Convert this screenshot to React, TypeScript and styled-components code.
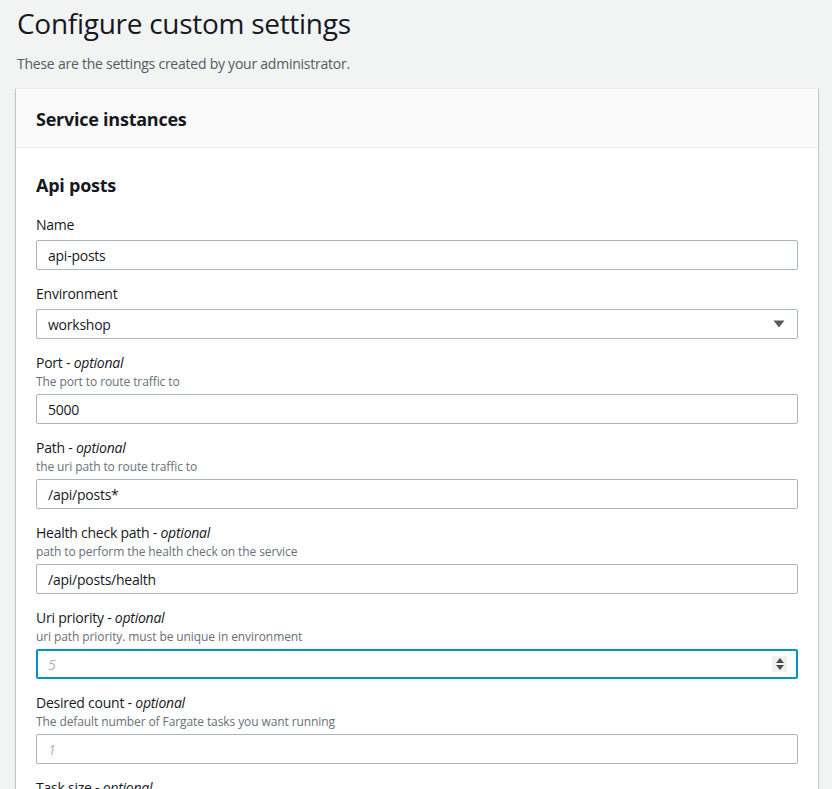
import React from "react";
import styled, { createGlobalStyle } from "styled-components";

const GlobalStyle = createGlobalStyle`
  html, body {
    margin: 0;
    padding: 0;
    background: #f2f3f3;
  }
  body {
    font-family: "Open Sans", "Noto Sans", Arial, sans-serif;
    color: #16191f;
    letter-spacing: -0.015em;
  }
`;

const Page = styled.div`
  padding: 0 14px 40px 16px;
`;

const Title = styled.h1`
  margin: 0;
  padding: 3px 0 0 1px;
  font-size: 28px;
  line-height: 40px;
  font-weight: 400;
  letter-spacing: -0.01em;
  color: #16191f;
`;

const Subtitle = styled.p`
  margin: 10px 0 0 1px;
  font-size: 14px;
  line-height: 22px;
  color: #545b64;
`;

const Container = styled.section`
  margin-top: 13px;
  background: #ffffff;
  box-shadow: 0 1px 1px 0 rgba(0, 28, 36, 0.3), 1px 1px 1px 0 rgba(0, 28, 36, 0.15),
    -1px 1px 1px 0 rgba(0, 28, 36, 0.15);
  border-top: 1px solid #eaeded;
`;

const ContainerHeader = styled.header`
  background: #fafafa;
  border-bottom: 1px solid #eaeded;
  padding: 2px 20px 0;
  height: 59px;
  box-sizing: border-box;
  display: flex;
  align-items: center;
`;

const HeaderTitle = styled.h2`
  margin: 0;
  font-size: 18px;
  line-height: 24px;
  font-weight: 700;
`;

const Body = styled.div`
  padding: 22px 20px 20px;
  display: flex;
  flex-direction: column;
`;

const SectionTitle = styled.h3`
  margin: 0 0 14px;
  font-size: 18px;
  line-height: 30px;
  font-weight: 700;
`;

const Fields = styled.div`
  display: flex;
  flex-direction: column;
  gap: 13px;
`;

const Field = styled.div`
  display: flex;
  flex-direction: column;
`;

const Label = styled.label`
  font-size: 14px;
  line-height: 22px;
  color: #16191f;
`;

const Optional = styled.i`
  font-style: italic;
`;

const Description = styled.div`
  font-size: 12px;
  line-height: 16px;
  letter-spacing: -0.008em;
  color: #687078;
`;

const Box = styled.div<{ $focused?: boolean }>`
  margin-top: 4px;
  height: 30px;
  box-sizing: border-box;
  display: flex;
  align-items: center;
  background: #ffffff;
  border: 1px solid #aab7b8;
  border-radius: 2px;
  padding: 0 9px 0 11px;
  ${(p) =>
    p.$focused &&
    `
    border: 2px solid #0097c4;
    padding: 0 8px 0 10px;
  `}
`;

const TextInput = styled.input`
  flex: 1;
  min-width: 0;
  border: none;
  outline: none;
  background: transparent;
  padding: 0;
  font-family: inherit;
  letter-spacing: inherit;
  font-size: 14px;
  color: #16191f;
  &::placeholder {
    color: #aab7b8;
    font-style: italic;
  }
`;

const SelectText = styled.span`
  flex: 1;
  font-size: 14px;
  color: #16191f;
`;

const Spinner = styled.span`
  width: 15px;
  height: 16px;
  background: #efefef;
  display: flex;
  flex-direction: column;
  align-items: center;
  justify-content: center;
  gap: 2px;
  margin-right: 1px;
`;

const Arrow = styled.span<{ $up?: boolean }>`
  width: 0;
  height: 0;
  border-left: 4px solid transparent;
  border-right: 4px solid transparent;
  ${(p) =>
    p.$up
      ? "border-bottom: 5px solid #4a4a4a;"
      : "border-top: 5px solid #4a4a4a;"}
`;

const CaretIcon = styled.svg`
  flex: none;
  margin-right: 3px;
`;

const Caret = () => (
  <CaretIcon width="12" height="12" viewBox="0 0 12 12">
    <path d="M0.5 2.5h11L6 9.5z" fill="#545b64" />
  </CaretIcon>
);

type FieldDef = {
  label: string;
  optional?: boolean;
  description?: string;
  value?: string;
  placeholder?: string;
  kind?: "text" | "select" | "number";
  focused?: boolean;
};

const fields: FieldDef[] = [
  { label: "Name", value: "api-posts" },
  { label: "Environment", value: "workshop", kind: "select" },
  { label: "Port", optional: true, description: "The port to route traffic to", value: "5000" },
  { label: "Path", optional: true, description: "the uri path to route traffic to", value: "/api/posts*" },
  {
    label: "Health check path",
    optional: true,
    description: "path to perform the health check on the service",
    value: "/api/posts/health",
  },
  {
    label: "Uri priority",
    optional: true,
    description: "uri path priority. must be unique in environment",
    placeholder: "5",
    kind: "number",
    focused: true,
  },
  {
    label: "Desired count",
    optional: true,
    description: "The default number of Fargate tasks you want running",
    placeholder: "1",
  },
  {
    label: "Task size",
    optional: true,
    description: "The size of the task you want to run",
    value: "x-small",
    kind: "select",
  },
];

export default function App() {
  return (
    <>
      <GlobalStyle />
      <Page>
        <Title>Configure custom settings</Title>
        <Subtitle>These are the settings created by your administrator.</Subtitle>
        <Container>
          <ContainerHeader>
            <HeaderTitle>Service instances</HeaderTitle>
          </ContainerHeader>
          <Body>
            <SectionTitle>Api posts</SectionTitle>
            <Fields>
              {fields.map((f) => (
                <Field key={f.label}>
                  <Label>
                    {f.label}
                    {f.optional && (
                      <>
                        {" - "}
                        <Optional>optional</Optional>
                      </>
                    )}
                  </Label>
                  {f.description && <Description>{f.description}</Description>}
                  <Box $focused={f.focused}>
                    {f.kind === "select" ? (
                      <>
                        <SelectText>{f.value}</SelectText>
                        <Caret />
                      </>
                    ) : (
                      <>
                        <TextInput
                          type="text"
                          defaultValue={f.value}
                          placeholder={f.placeholder}
                          readOnly
                        />
                        {f.kind === "number" && (
                          <Spinner>
                            <Arrow $up />
                            <Arrow />
                          </Spinner>
                        )}
                      </>
                    )}
                  </Box>
                </Field>
              ))}
            </Fields>
          </Body>
        </Container>
      </Page>
    </>
  );
}
